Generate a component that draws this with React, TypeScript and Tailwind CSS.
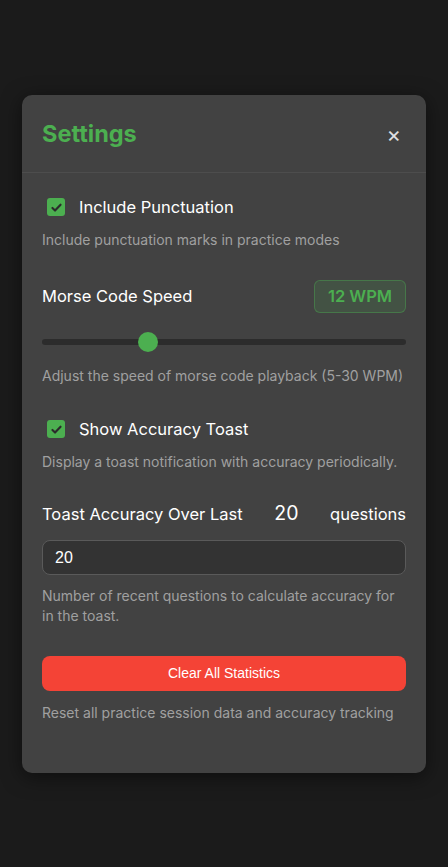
import React from "react";

function Check() {
  return (
    <span className="flex h-[18px] w-[18px] items-center justify-center rounded-[3px] bg-[#4caf50]">
      <svg width="13" height="13" viewBox="0 0 16 16" fill="none">
        <path d="M3 8.5l3.2 3.2L13 4.5" stroke="#2b2b2b" strokeWidth="2.6" strokeLinecap="round" strokeLinejoin="round" />
      </svg>
    </span>
  );
}

export default function App() {
  const font = { fontFamily: "Inter, 'Noto Sans', sans-serif" };
  return (
    <div className="flex min-h-[867px] w-full items-start justify-center bg-[#1b1b1b] pt-[95px]" style={font}>
      <div className="w-[404px] rounded-[10px] bg-[#424242] shadow-[0_4px_20px_rgba(0,0,0,0.5)]">
        <div className="flex h-[78px] items-center justify-between border-b border-[#4d4d4d] px-5">
          <h2 className="mt-[1px] text-[23.5px] font-bold text-[#4caf50]">Settings</h2>
          <span className="mr-[5px] text-[22px] leading-none text-[#e0e0e0]">×</span>
        </div>
        <div className="px-5 pb-[50px] pt-[22px]">
          <label className="flex h-6 items-center gap-[14px] pl-[5px] text-[16.5px] text-white">
            <Check />
            <span>Include Punctuation</span>
          </label>
          <p className="mt-[11px] text-[14px] leading-5 text-[#a0a0a0]">Include punctuation marks in practice modes</p>

          <div className="mt-[30px] flex h-[33px] items-center justify-between">
            <span className="text-[16.5px] text-white">Morse Code Speed</span>
            <span className="flex h-[33px] w-[92px] items-center justify-center rounded-[6px] border border-[#4caf50]/40 bg-[#4caf50]/15 text-[16.5px] font-semibold text-[#4caf50]">12 WPM</span>
          </div>
          <div className="relative mt-[19px] h-5">
            <div className="absolute left-0 right-0 top-[7px] h-[6px] rounded-full bg-[#2c2c2c]" />
            <div className="absolute left-[96px] top-0 h-5 w-5 rounded-full bg-[#4caf50]" />
          </div>
          <p className="mt-[14px] text-[14px] leading-5 text-[#a0a0a0]">Adjust the speed of morse code playback (5-30 WPM)</p>

          <label className="mt-[31px] flex h-6 items-center gap-[14px] pl-[5px] text-[16.5px] text-white">
            <Check />
            <span>Show Accuracy Toast</span>
          </label>
          <p className="mt-[11px] text-[14px] leading-5 text-[#a0a0a0]">Display a toast notification with accuracy periodically.</p>

          <div className="mt-[30px] flex h-6 items-center justify-between text-[16.5px] text-white">
            <span>Toast Accuracy Over Last</span>
            <span className="text-[19.5px]">20</span>
            <span>questions</span>
          </div>
          <div className="mt-[14px] flex h-[35px] items-center rounded-[8px] border border-[#5a5a5a] bg-[#333333] px-3 text-[16px] text-white" style={{ fontFamily: "'Liberation Sans', Arial, sans-serif" }}>
            20
          </div>
          <p className="mt-[11px] text-[14px] leading-5 text-[#a0a0a0]">Number of recent questions to calculate accuracy for in the toast.</p>

          <button className="mt-[30px] flex h-[35px] w-full items-center justify-center rounded-[8px] bg-[#f44336] text-[14px] text-white" style={{ fontFamily: "'Liberation Sans', Arial, sans-serif" }}>
            Clear All Statistics
          </button>
          <p className="mt-[12px] text-[14px] leading-5 text-[#a0a0a0]">Reset all practice session data and accuracy tracking</p>
        </div>
      </div>
    </div>
  );
}
